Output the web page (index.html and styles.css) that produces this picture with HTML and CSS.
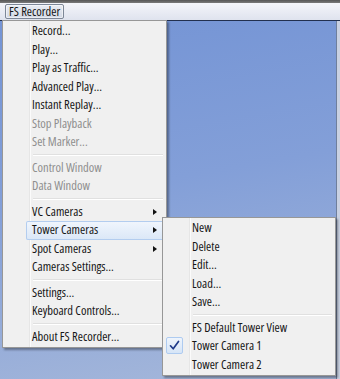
FILE: index.html
```html
<!DOCTYPE html>
<html>
<head>
<meta charset="utf-8">
<link rel="stylesheet" href="styles.css">
</head>
<body>
<div class="window">
  <div class="titlebar"></div>
  <div class="menubar">
    <div class="menubar-item active">FS Recorder</div>
  </div>
  <div class="desktop">
    <div class="sky"></div>
    <div class="edge"></div>
  </div>

  <div class="menu main-menu">
    <div class="item">Record...</div>
    <div class="item">Play...</div>
    <div class="item">Play as Traffic...</div>
    <div class="item">Advanced Play...</div>
    <div class="item">Instant Replay...</div>
    <div class="item disabled">Stop Playback</div>
    <div class="item disabled">Set Marker...</div>
    <div class="sep"></div>
    <div class="item disabled">Control Window</div>
    <div class="item disabled">Data Window</div>
    <div class="sep"></div>
    <div class="item sub">VC Cameras</div>
    <div class="item sub hot">Tower Cameras</div>
    <div class="item sub">Spot Cameras</div>
    <div class="item">Cameras Settings...</div>
    <div class="sep"></div>
    <div class="item">Settings...</div>
    <div class="item">Keyboard Controls...</div>
    <div class="sep"></div>
    <div class="item">About FS Recorder...</div>
  </div>

  <div class="menu sub-menu">
    <div class="item">New</div>
    <div class="item">Delete</div>
    <div class="item">Edit...</div>
    <div class="item">Load...</div>
    <div class="item">Save...</div>
    <div class="sep"></div>
    <div class="item">FS Default Tower View</div>
    <div class="item checked">
      <span class="check"><svg width="11" height="11" viewBox="0 0 11 11"><path d="M1.5 5.8 L4.2 8.8 L9.5 1.5" fill="none" stroke="#1e3a8a" stroke-width="1.7" stroke-linecap="round" stroke-linejoin="round"/></svg></span>
      Tower Camera 1
    </div>
    <div class="item">Tower Camera 2</div>
  </div>
</div>
</body>
</html>
```

FILE: styles.css
```css
html, body {
  margin: 0;
  padding: 0;
}
body {
  width: 340px;
  height: 379px;
  overflow: hidden;
  font-family: "Open Sans", "Noto Sans", sans-serif;
  font-size: 12.5px;
  font-stretch: 75%;
  color: #161616;
}
.window {
  position: relative;
  width: 340px;
  height: 379px;
  display: flex;
  flex-direction: column;
}
.titlebar {
  height: 3px;
  background: linear-gradient(#555, #7a7a7a);
}
.menubar {
  height: 17px;
  background: linear-gradient(#f4f5fa, #dfe3ee);
  display: flex;
  align-items: stretch;
  padding: 1px 4px 0 5px;
  box-sizing: border-box;
}
.menubar-item {
  padding: 0 3px 0 3px;
  line-height: 14px;
  height: 15px;
  box-sizing: border-box;
  border: 1px solid transparent;
  border-radius: 2px;
}
.menubar-item.active {
  background: linear-gradient(#e9ecf3, #d3d9e5);
  border-color: #7d8797;
  box-shadow: inset 0 0 0 1px rgba(255,255,255,0.5);
}
.desktop {
  flex: 1;
  display: flex;
  border-top: 1px solid #22304f;
}
.sky {
  flex: 1;
  background: linear-gradient(170deg, #7494d5 0%, #839fd8 45%, #a6b8da 100%);
}
.edge {
  width: 3px;
  border-left: 1px solid #6f7f9c;
  background: #c9d1e2;
}

.menu {
  position: absolute;
  background: #f0f0f0;
  border: 1px solid #979797;
  padding: 1px;
  box-shadow: 2px 2px 2px rgba(0,0,0,0.35);
  background-image: linear-gradient(to right, transparent 26px, #e6e6e6 26px, #e6e6e6 27px, #fbfbfb 27px, #fbfbfb 28px, transparent 28px);
}
.main-menu {
  left: 2px;
  top: 20px;
  width: 161px;
}
.sub-menu {
  left: 162px;
  top: 217px;
  width: 170px;
}
.item {
  position: relative;
  height: 18.5px;
  line-height: 18.5px;
  padding-left: 28px;
  white-space: nowrap;
}
.item.disabled {
  color: #8e8e8e;
}
.item.sub::after {
  content: "";
  position: absolute;
  right: 8px;
  top: 6px;
  border-left: 4px solid #111;
  border-top: 3.5px solid transparent;
  border-bottom: 3.5px solid transparent;
}
.item.hot {
  margin-left: 22px;
  padding-left: 6px;
  background: linear-gradient(#f1f6fd, #dae7f7);
  box-shadow: inset 0 0 0 1px #b3cdef;
  border-radius: 2px;
}
.sep {
  height: 1px;
  margin: 2px 2px 3px 29px;
  background: #e0e0e0;
  border-bottom: 1px solid #ffffff;
}
.check {
  position: absolute;
  left: 2px;
  top: 0;
  width: 17px;
  height: 17px;
  box-sizing: border-box;
  border: 1px solid #aecbf0;
  border-radius: 2px;
  background: linear-gradient(#eef4fc, #d6e5f7);
  display: flex;
  align-items: center;
  justify-content: center;
}
```
